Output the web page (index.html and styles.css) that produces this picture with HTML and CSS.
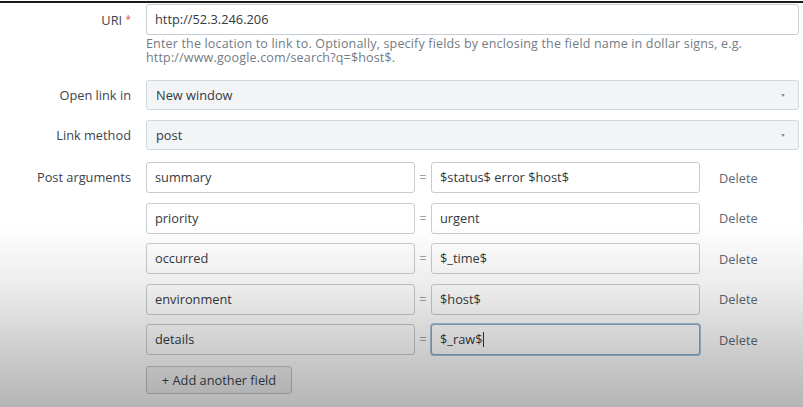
FILE: index.html
```html
<!DOCTYPE html>
<html>
<head>
<meta charset="utf-8">
<link rel="stylesheet" href="styles.css">
</head>
<body>
<div class="topline"></div>
<div class="form">
  <div class="row">
    <div class="label">URI <span class="req">*</span></div>
    <div class="ctl">
      <div class="input">http://52.3.246.206</div>
      <p class="help">Enter the location to link to. Optionally, specify fields by enclosing the field name in dollar signs, e.g.<br>http://www.google.com/search?q=$host$.</p>
    </div>
  </div>
  <div class="row row-select">
    <div class="label">Open link in</div>
    <div class="ctl"><div class="select">New window<span class="caret"></span></div></div>
  </div>
  <div class="row row-select2">
    <div class="label">Link method</div>
    <div class="ctl"><div class="select">post<span class="caret"></span></div></div>
  </div>
  <div class="row row-args">
    <div class="label">Post arguments</div>
    <div class="ctl args">
      <div class="arg"><div class="input">summary</div><span class="eq">=</span><div class="input">$status$ error $host$</div><span class="del">Delete</span></div>
      <div class="arg"><div class="input">priority</div><span class="eq">=</span><div class="input">urgent</div><span class="del">Delete</span></div>
      <div class="arg"><div class="input">occurred</div><span class="eq">=</span><div class="input">$_time$</div><span class="del">Delete</span></div>
      <div class="arg"><div class="input">environment</div><span class="eq">=</span><div class="input">$host$</div><span class="del">Delete</span></div>
      <div class="arg"><div class="input">details</div><span class="eq">=</span><div class="input focus">$_raw$<span class="cursor"></span></div><span class="del">Delete</span></div>
      <div class="btn">+ Add another field</div>
    </div>
  </div>
</div>
<div class="shade"></div>
</body>
</html>
```
FILE: styles.css
```css
html, body {
  margin: 0;
  padding: 0;
  background: #ffffff;
  width: 803px;
  height: 407px;
  overflow: hidden;
  font-family: "Open Sans", Lato, "Liberation Sans", sans-serif;
  font-size: 12.8px;
  color: #3c444d;
}
.topline {
  margin-top: 1px;
  height: 2px;
  background: #1a1a1a;
}
.form {
  padding-top: 1px;
}
.row {
  display: grid;
  grid-template-columns: 131px 653px;
  column-gap: 15px;
}
.label {
  text-align: right;
  line-height: 31px;
  color: #3c444d;
}
.req {
  color: #d6563c;
  font-size: 10px;
  vertical-align: 2px;
}
.input {
  box-sizing: border-box;
  height: 31px;
  line-height: 29px;
  border: 1px solid #c7ccd2;
  border-radius: 3px;
  background: #ffffff;
  padding: 0 8px;
  color: #333a41;
  white-space: nowrap;
  overflow: hidden;
}
.help {
  margin: 2px 0 0;
  font-size: 12.5px;
  line-height: 14px;
  letter-spacing: 0.17px;
  color: #737b84;
}
.row-select { margin-top: 15px; }
.row-select2 { margin-top: 9px; }
.row-args { margin-top: 11px; }
.select {
  box-sizing: border-box;
  height: 30px;
  line-height: 28px;
  border: 1px solid #d2d7dc;
  border-radius: 3px;
  background: #f2f4f6;
  padding: 0 9px;
  color: #333a41;
  display: flex;
  justify-content: space-between;
  align-items: center;
}
.caret {
  width: 0;
  height: 0;
  border-left: 2.5px solid transparent;
  border-right: 2.5px solid transparent;
  border-top: 3px solid #8b939b;
  margin-right: 4px;
}
.args {
  display: flex;
  flex-direction: column;
  gap: 9.5px;
}
.arg {
  display: grid;
  grid-template-columns: 269px 16px 269px auto;
  align-items: center;
}
.eq {
  text-align: center;
  color: #9aa1a8;
  font-size: 12px;
}
.del {
  padding-left: 19px;
  color: #5d666f;
}
.input.focus {
  border-color: #86a8c9;
  box-shadow: 0 0 0 1px #a9c4de;
}
.cursor {
  display: inline-block;
  width: 1px;
  height: 15px;
  background: #333;
  vertical-align: -3px;
}
.btn {
  margin-top: 1px;
  box-sizing: border-box;
  width: 146px;
  height: 28px;
  line-height: 26px;
  border: 1px solid #c4c8cc;
  border-radius: 3px;
  background: #f3f4f5;
  text-align: center;
  color: #3c444d;
}
.shade {
  position: absolute;
  left: 0;
  top: 225px;
  width: 803px;
  height: 182px;
  background: linear-gradient(to bottom, rgba(0,0,0,0) 0%, rgba(0,0,0,0.08) 35%, rgba(0,0,0,0.2) 70%, rgba(0,0,0,0.29) 100%);
  pointer-events: none;
}
```
